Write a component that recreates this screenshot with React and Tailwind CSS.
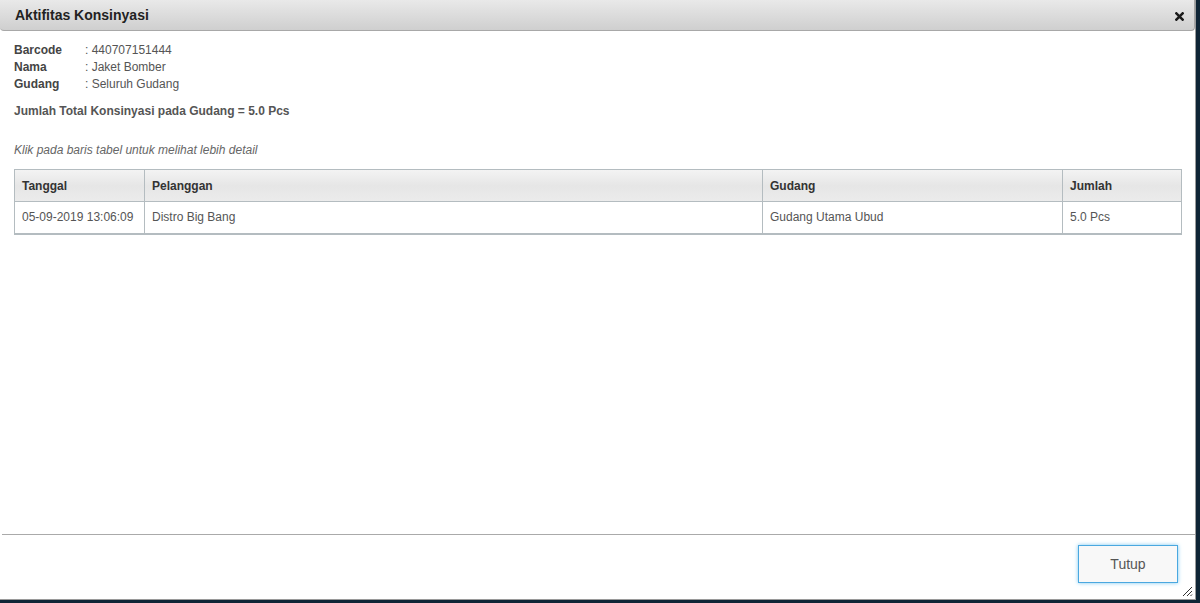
import React from "react";

export default function App() {
  return (
    <div className="w-[1200px] h-[603px] bg-[#0f2536] overflow-hidden" style={{ fontFamily: '"Liberation Sans", Arial, sans-serif' }}>
      <div className="w-[1196px] h-[600px] bg-white border-r border-b border-[#9a9a9a] flex flex-col relative">
        {/* title bar */}
        <div className="h-[31px] shrink-0 flex items-center justify-between pl-[15px] pr-[10px] bg-gradient-to-b from-[#e9e9e9] to-[#cfcfcf] border-b border-r border-[#a8a8a8] rounded-br-[4px] rounded-bl-[4px]">
          <span className="text-[14px] font-bold text-[#222]">Aktifitas Konsinyasi</span>
          <svg width="9" height="9" viewBox="0 0 10 10" className="mt-[2px]">
            <path d="M1.5 1.5 L8.5 8.5 M8.5 1.5 L1.5 8.5" stroke="#1a1a1a" strokeWidth="2.8" strokeLinecap="square" />
          </svg>
        </div>
        {/* content */}
        <div className="flex-1 px-[14px] pt-[11px] text-[12px] text-[#555]">
          <div className="leading-[17px]">
            <div className="flex"><span className="w-[71px] font-semibold text-[#444]">Barcode</span><span>: 440707151444</span></div>
            <div className="flex"><span className="w-[71px] font-semibold text-[#444]">Nama</span><span>: Jaket Bomber</span></div>
            <div className="flex"><span className="w-[71px] font-semibold text-[#444]">Gudang</span><span>: Seluruh Gudang</span></div>
          </div>
          <div className="mt-[10px] leading-[17px] font-bold text-[#555]">Jumlah Total Konsinyasi pada Gudang = 5.0 Pcs</div>
          <div className="mt-[22px] leading-[17px] italic text-[#666]">Klik pada baris tabel untuk melihat lebih detail</div>
          <table className="mt-[10px] w-[1168px] border-collapse border border-[#b4bcc0] border-b-2 text-[12px]">
            <thead>
              <tr className="h-[32px] bg-gradient-to-b from-[#f3f3f3] via-[#e6e6e6] to-[#ececec]">
                <th className="w-[130px] text-left font-bold text-[#333] px-[7px] border-r border-b border-[#b4bcc0]">Tanggal</th>
                <th className="w-[618px] text-left font-bold text-[#333] px-[7px] border-r border-b border-[#b4bcc0]">Pelanggan</th>
                <th className="w-[300px] text-left font-bold text-[#333] px-[7px] border-r border-b border-[#b4bcc0]">Gudang</th>
                <th className="text-left font-bold text-[#333] px-[7px] border-b border-[#b4bcc0]">Jumlah</th>
              </tr>
            </thead>
            <tbody>
              <tr className="h-[32px] text-[#555]">
                <td className="px-[7px] border-r border-[#b4bcc0]">05-09-2019 13:06:09</td>
                <td className="px-[7px] border-r border-[#b4bcc0]">Distro Big Bang</td>
                <td className="px-[7px] border-r border-[#b4bcc0]">Gudang Utama Ubud</td>
                <td className="px-[7px]">5.0 Pcs</td>
              </tr>
            </tbody>
          </table>
        </div>
        {/* footer */}
        <div className="h-[65px] shrink-0 ml-[2px] border-t border-[#aaa] flex items-start justify-end pt-[10px] pr-[17px]">
          <button className="w-[100px] h-[38px] bg-[#f8f8f8] border border-[#4aa8e0] shadow-[0_0_4px_#7cc8f0] text-[14px] text-[#555]" style={{ fontFamily: '"Liberation Sans", Arial, sans-serif' }}>
            Tutup
          </button>
        </div>
        <svg className="absolute right-[2px] bottom-[2px]" width="12" height="12" viewBox="0 0 12 12">
          <path d="M11 2 L2 11 M11 6 L6 11 M11 9.5 L9.5 11" stroke="#333" strokeWidth="1" />
        </svg>
      </div>
    </div>
  );
}
